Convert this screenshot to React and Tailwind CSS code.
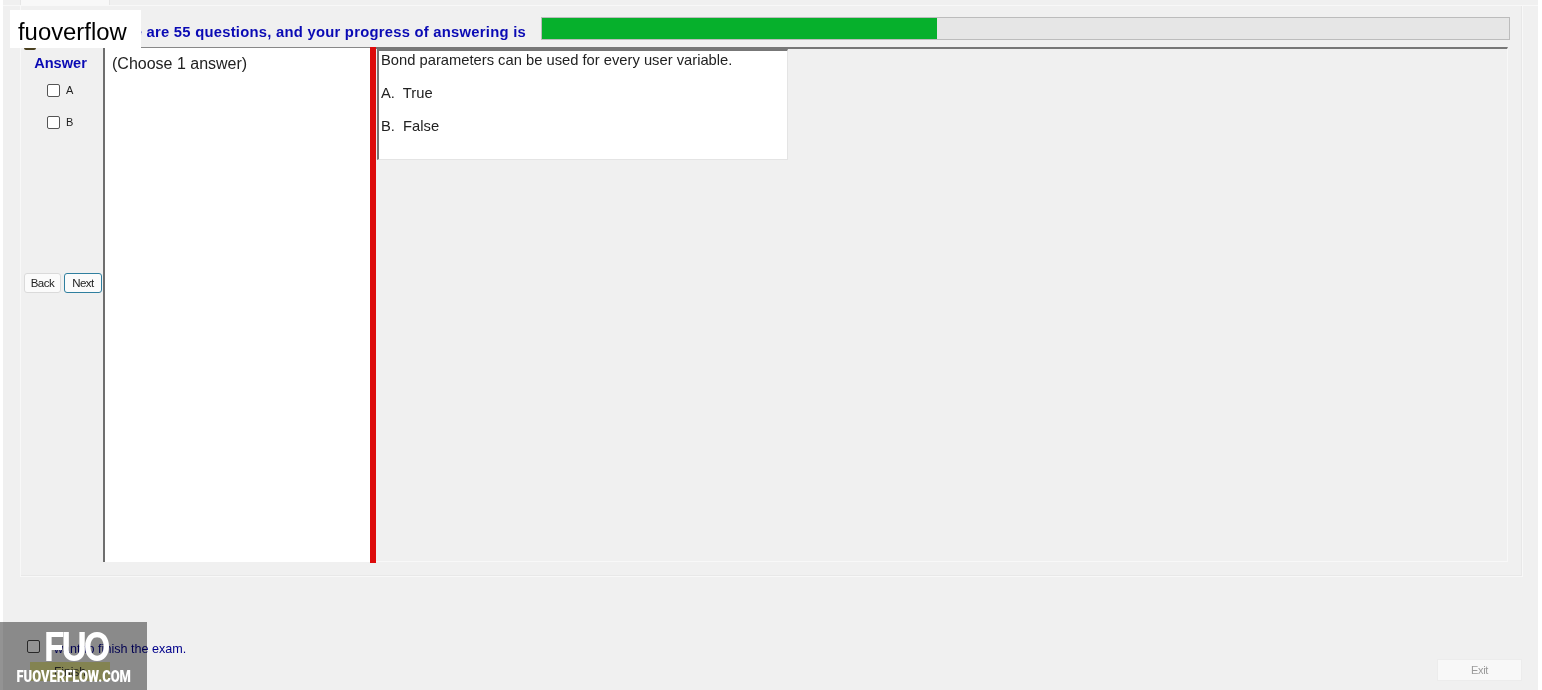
import React from 'react';

const font = { arial: 'font-["Liberation_Sans",Arial,sans-serif]' };

const AnswerOption = ({ label }) => (
    <label className="flex items-center h-[14px] pl-[24px] gap-[6px]">
        <span className="block w-[13px] h-[13px] rounded-[2px] border border-[#555] bg-white" />
        <span className="text-[11px] leading-none text-[#222]">{label}</span>
    </label>
);

const Watermark = () => (
    <div className="absolute left-0 bottom-0 w-[147px] h-[68px] flex flex-col items-center">
        <div className="absolute inset-0 bg-[#939393] mix-blend-multiply" />
        <div className="relative font-['Inter',sans-serif] font-bold text-white text-[40px] leading-[40px] tracking-[-4px] scale-x-[0.88] h-[43px] mt-[5px] pl-[4px]">FUO</div>
        <div className="relative font-['Roboto',sans-serif] font-black text-white text-[16px] leading-[18px] whitespace-nowrap scale-x-[0.81] -mt-[2px]">FUOVERFLOW.COM</div>
    </div>
);

export default function App() {
    return (
        <div className={`relative w-[1542px] h-[690px] overflow-hidden bg-white pl-[3px] pr-[4px] ${font.arial}`}>
            <div className="h-full bg-[#f0f0f0] flex flex-col">
                {/* tab strip */}
                <div className="h-[6px] pl-[17px] shrink-0 border-b border-[#f8f8f8]">
                    <div className="w-[90px] h-full bg-[#f8f8f8] border-x border-[#e6e6e6]" />
                </div>

                {/* group box */}
                <div className="ml-[17px] w-[1503px] h-[571px] shrink-0 border border-[#f8f8f8] border-t-0 pl-[2px] pr-[14px] flex flex-col shadow-[inset_-1px_-1px_0_#e8e8e8]">
                    <div className="flex items-center h-[23px] mt-[11px] shrink-0">
                        <div className="w-[518px] pr-[15px] text-right font-bold text-[14.8px] tracking-[0.25px] text-[#0a0ab4] whitespace-nowrap overflow-hidden pt-[8px] leading-[15px]">
                            There are 55 questions, and your progress of answering is
                        </div>
                        <div className="w-[969px] h-[23px] -mr-[2px] bg-[#e6e6e6] border border-[#bcbcbc] shrink-0">
                            <div className="h-full w-[395px] bg-[#06b02c]" />
                        </div>
                    </div>

                    <div className="flex h-[515px] mt-[7px] shrink-0">
                        {/* answer column */}
                        <div className="w-[80px] shrink-0 flex flex-col relative">
                            <div className="text-[14.6px] font-bold text-[#0a0ab4] text-center pt-[8px] leading-[16px] pr-[5px]">Answer</div>
                            <div className="flex flex-col gap-[18px] mt-[12px]">
                                <AnswerOption label="A" />
                                <AnswerOption label="B" />
                            </div>
                            <div className="flex gap-[3px] mt-[144px] pl-px">
                                <button className="w-[37px] h-[20px] bg-[#fbfbfb] border border-[#dadada] rounded-[3px] text-[11.5px] text-[#222] tracking-[-0.5px] pt-px">Back</button>
                                <button className="w-[38px] h-[20px] bg-[#fbfbfb] border border-[#2f7f9f] rounded-[3px] text-[11.5px] text-[#222] tracking-[-0.5px] pt-px">Next</button>
                            </div>
                        </div>

                        {/* choose panel */}
                        <div className="w-[267px] shrink-0 bg-white border-l-2 border-[#6e6e6e] border-t border-t-[#888] pl-[7px] pt-[6px] text-[16px] leading-[19px] text-[#222]">
                            (Choose 1 answer)
                        </div>
                        <div className="w-[6px] shrink-0 bg-[#dd0b0b] h-[516px]" />

                        {/* question panel */}
                        <div className="w-[1132px] -mr-[2px] border-t-2 border-[#777] pl-px border-r border-b border-[#f8f8f8] border-t-[#777]">
                            <div className="w-[411px] h-[111px] bg-white border-l-2 border-t-2 border-[#777] border-r border-b border-r-[#e4e4e4] border-b-[#e4e4e4] pl-[2px] pt-px text-[14.74px] text-[#222]">
                                <p className="leading-[17px] whitespace-nowrap">Bond parameters can be used for every user variable.</p>
                                <p className="leading-[17px] mt-[16px] whitespace-pre">A.  True</p>
                                <p className="leading-[17px] mt-[16px] whitespace-pre">B.  False</p>
                            </div>
                        </div>
                    </div>
                </div>

                {/* footer */}
                <div className="flex-1 flex justify-between items-end pl-[24px] pr-[16px] pb-[9px]">
                    <div className="flex flex-col">
                        <label className="flex items-center gap-[7px] h-[15px]">
                            <span className="block w-[13px] h-[13px] rounded-[2px] border border-[#444] bg-white" />
                            <span className="text-[12.6px] text-[#00008b] relative top-[3px]">I want to finish the exam.</span>
                        </label>
                        <button className="ml-[3px] mt-[8px] w-[80px] h-[19px] bg-[#e4e48c] text-[12px] text-[#333] leading-none">Finish</button>
                    </div>
                    <button className="w-[85px] h-[22px] bg-[#f8f8f8] border border-[#ececec] text-[11px] text-[#9a9a9a] tracking-[-0.3px]">Exit</button>
                </div>
            </div>

            {/* site overlays */}
            <div className="absolute left-[24px] top-[48px] w-[12px] h-[2px] rounded-b-full bg-[#4a4020]" />
            <div className="absolute left-[10px] top-[10px] w-[131px] h-[38px] bg-white text-black text-[23.85px] leading-[43px] pl-[8px] whitespace-nowrap">fuoverflow</div>
            <Watermark />
        </div>
    );
}
